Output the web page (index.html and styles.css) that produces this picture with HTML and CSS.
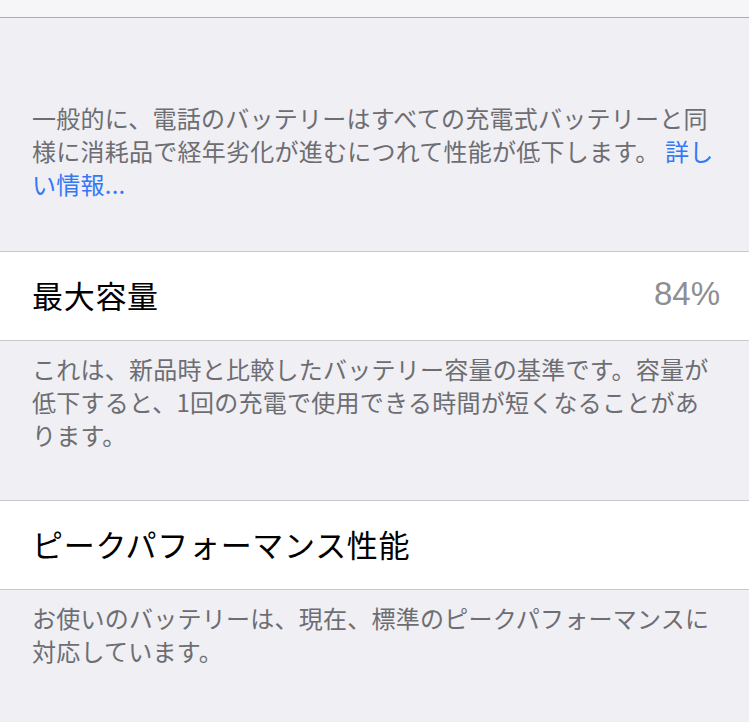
FILE: index.html
```html
<!DOCTYPE html>
<html lang="ja">
<head>
  <meta charset="UTF-8">
  <meta name="viewport" content="width=device-width, initial-scale=1">
  <title>バッテリーの状態</title>
  <link rel="stylesheet" href="styles.css">
</head>
<body>
  <div class="top-cell"></div>

  <p class="footer footer-first">
    一般的に、電話のバッテリーはすべての充電式バッテリーと同様に消耗品で経年劣化が進むにつれて性能が低下します。 <a href="#" class="more">詳しい情報...</a>
  </p>

  <div class="cell">
    <span class="cell-title">最大容量</span>
    <span class="cell-value">84%</span>
  </div>

  <p class="footer">
    これは、新品時と比較したバッテリー容量の基準です。容量が低下すると、1回の充電で使用できる時間が短くなることがあります。
  </p>

  <div class="cell">
    <span class="cell-title">ピークパフォーマンス性能</span>
  </div>

  <p class="footer">
    お使いのバッテリーは、現在、標準のピークパフォーマンスに対応しています。
  </p>
</body>
</html>
```

FILE: styles.css
```css
body {
  font-family: "Noto Sans CJK JP", "Noto Sans", sans-serif;
  background-color: #efeff4;
  margin: 0;
  padding: 0;
}

.top-cell {
  height: 17px;
  background-color: #f6f6f8;
  border-bottom: 1px solid #aeaeb3;
}

.footer {
  margin: 0;
  padding: 11px 27px 49px 32px;
  font-size: 24px;
  letter-spacing: 0.25px;
  line-height: 33px;
  color: #6d6d72;
}

.footer-first {
  padding-top: 83px;
  padding-bottom: 51px;
}

.more {
  color: #3478f6;
  text-decoration: none;
}

.cell {
  display: flex;
  align-items: center;
  justify-content: space-between;
  height: 84px;
  padding: 0 29px 4px 32px;
  background-color: #fff;
  border-top: 1px solid #c8c7cc;
  border-bottom: 1px solid #c8c7cc;
}

.cell-title {
  font-size: 31px;
  letter-spacing: 0.7px;
  color: #000;
}

.cell-value {
  font-family: "Liberation Sans", Arial, sans-serif;
  font-size: 33px;
  color: #8e8e93;
}
```
